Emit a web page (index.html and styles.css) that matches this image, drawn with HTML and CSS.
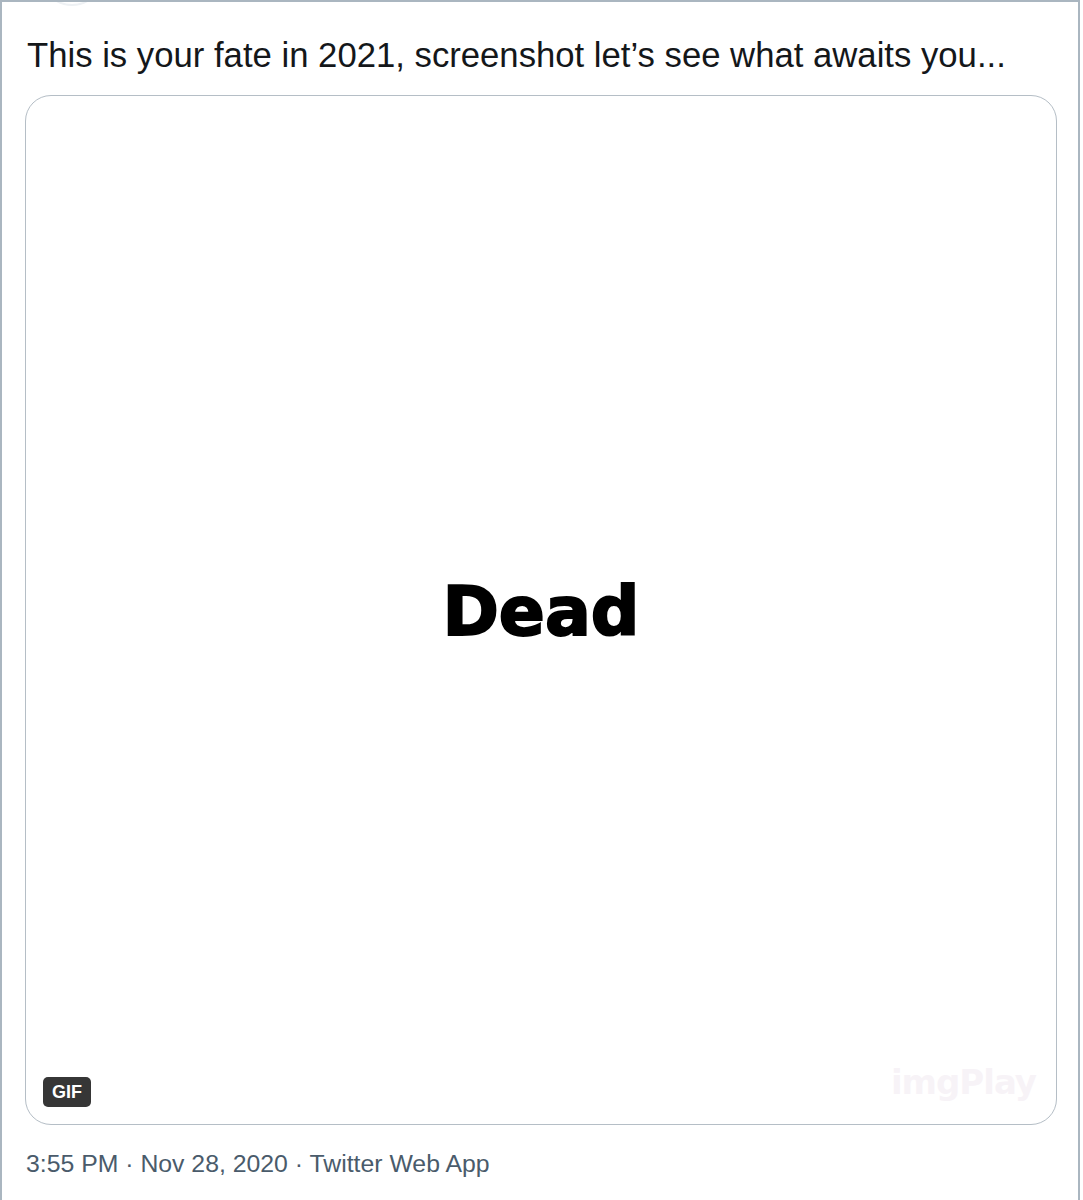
FILE: index.html
```html
<!DOCTYPE html>
<html lang="en">
<head>
<meta charset="utf-8">
<title>Tweet</title>
<link rel="stylesheet" href="styles.css">
</head>
<body>
<div class="frame">
  <span class="avatar-ring"></span>
  <p class="tweet-text">This is your fate in 2021, screenshot let’s see what awaits you...</p>
  <div class="media">
    <div class="dead">Dead</div>
    <span class="gif-badge">GIF</span>
    <span class="watermark">imgPlay</span>
  </div>
  <div class="meta">3:55 PM · Nov 28, 2020 · Twitter Web App</div>
</div>
</body>
</html>
```

FILE: styles.css
```css
html, body {
  margin: 0;
  padding: 0;
  background: #ffffff;
}

.frame {
  position: relative;
  box-sizing: border-box;
  width: 1080px;
  height: 1200px;
  border-top: 2px solid #aab6c0;
  border-left: 2px solid #aab6c0;
  border-right: 2px solid #aab6c0;
  padding: 33px 21px 0 23px;
  overflow: hidden;
  font-family: "Liberation Sans", Arial, sans-serif;
}

.avatar-ring {
  position: absolute;
  left: 38px;
  top: -60px;
  width: 60px;
  height: 60px;
  border-radius: 50%;
  border: 2px solid #eef1f4;
}

.tweet-text {
  margin: 0;
  font-size: 34.7px;
  line-height: 40px;
  color: #14171a;
  padding-left: 2px;
}

.media {
  position: relative;
  box-sizing: border-box;
  margin-top: 20px;
  height: 1030px;
  border: 1.5px solid #b5bec6;
  border-radius: 26px;
  display: flex;
  align-items: center;
  justify-content: center;
  background: #ffffff;
}

.dead {
  font-family: "DejaVu Sans", sans-serif;
  font-weight: bold;
  font-size: 68px;
  line-height: 1;
  color: #000000;
  -webkit-text-stroke: 2px #000000;
  padding-top: 4px;
}

.gif-badge {
  position: absolute;
  left: 17px;
  bottom: 17px;
  width: 48px;
  height: 30px;
  border-radius: 5px;
  background: #363636;
  color: #ffffff;
  font-family: "Liberation Sans", Arial, sans-serif;
  font-weight: bold;
  font-size: 18px;
  display: flex;
  align-items: center;
  justify-content: center;
}

.watermark {
  position: absolute;
  right: 20px;
  bottom: 22px;
  font-family: "DejaVu Sans", sans-serif;
  font-weight: bold;
  font-size: 34px;
  color: #f7f3f7;
  letter-spacing: -1px;
}

.meta {
  margin-top: 24px;
  font-size: 24.8px;
  line-height: 30px;
  color: #4a5b6b;
  padding-left: 1px;
}
```
